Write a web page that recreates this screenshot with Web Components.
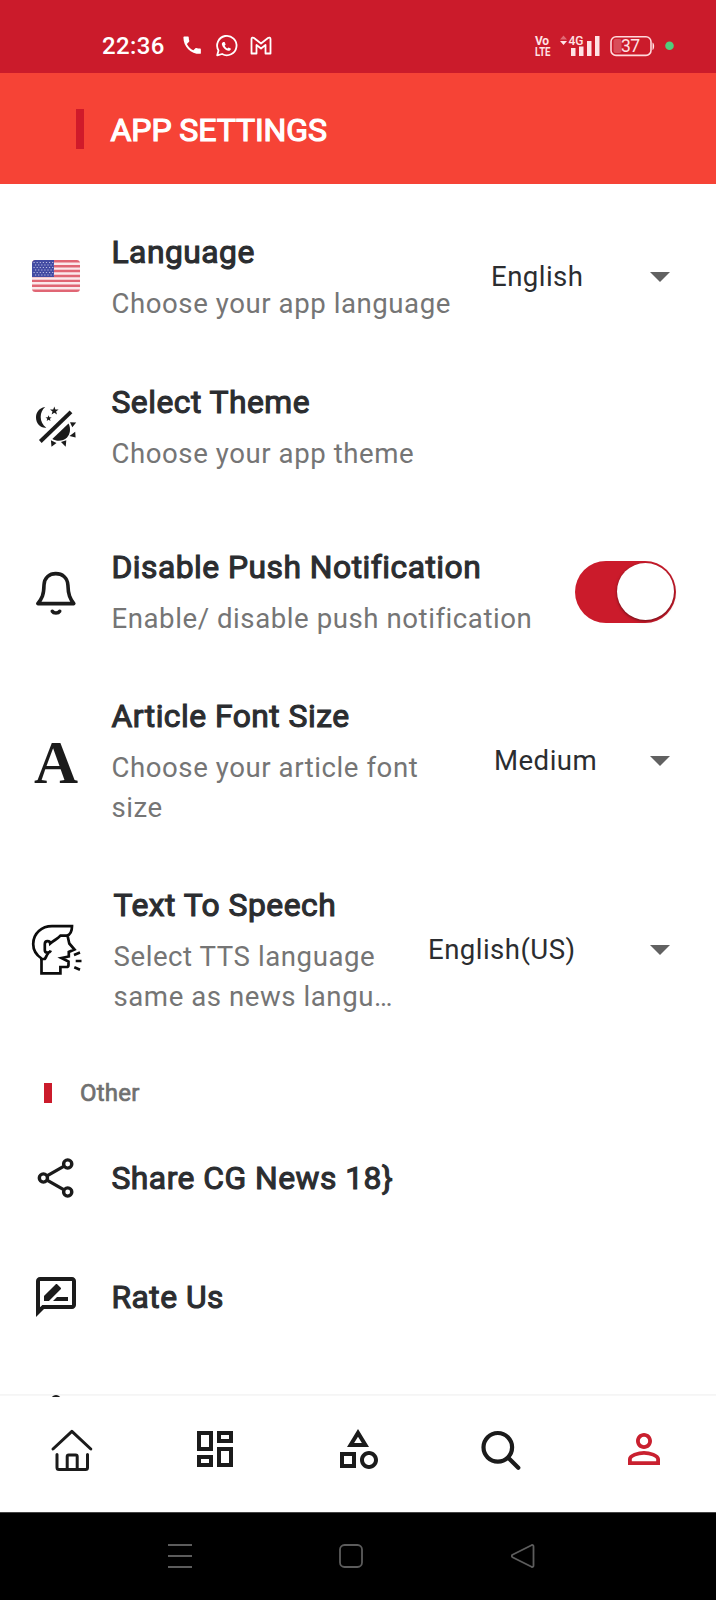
<!DOCTYPE html>
<html lang="en">
<head>
<meta charset="utf-8">
<title>App Settings</title>
<style>
html, body { margin: 0; background: #fff; font-family: Roboto, "Liberation Sans", sans-serif; }
</style>
</head>
<body>
<settings-screen></settings-screen>
<script>
const define = (name, html, setup) => {
  const tpl = document.createElement('template');
  tpl.innerHTML = html;
  customElements.define(name, class extends HTMLElement {
    constructor() {
      super();
      this.attachShadow({ mode: 'open' }).append(tpl.content.cloneNode(true));
    }
    connectedCallback() { if (setup) setup(this, this.shadowRoot); }
  });
};

define('status-bar', `
<style>
:host { display: flex; align-items: center; height: 72.500px; box-sizing: border-box; padding: 20px 42px 0 102px; background: #cb1b2b; color: #fff; }
.time { font-size: 24px; font-weight: 500; line-height: 28px; letter-spacing: .4px; width: 78px; }
svg { display: block; overflow: visible; }
.right { margin-left: auto; }
text { font-family: Roboto, sans-serif; fill: #ffe3e5; }
</style>
<span class="time">22:36</span>
<svg width="94" height="24" viewBox="0 0 94 24" fill="#fff">
  <path transform="translate(.5 -.5) scale(.97)" d="M6.620 10.790c1.440 2.830 3.760 5.140 6.590 6.590l2.200-2.200c.27-.27.67-.36 1.020-.24 1.120.37 2.330.57 3.570.57.55 0 1 .45 1 1V20c0 .55-.45 1-1 1-9.390 0-17-7.610-17-17 0-.55.45-1 1-1h3.500c.55 0 1 .45 1 1 0 1.250.2 2.450.57 3.570.11.35.03.74-.25 1.020l-2.200 2.200z"/>
  <path d="M37.200 21.300l1.300-4.800a9.700 9.700 0 1 1 3.600 3.500z" fill="none" stroke="#fff" stroke-width="1.800" stroke-linejoin="round"/>
  <path transform="translate(38.800 3.200) scale(.68)" d="M6.620 7c-1.500.5-2.600 2-2 4 1 4 5 8 9 9 2 .4 4-1 4.300-3l-3.500-2-1.800 1.600c-2-1-3.200-2.200-4-4l1.500-1.800L8.500 7z"/>
  <path d="M71.500 19.500V5c0-1.500 1.500-1.800 2.500-1l7 5.500 7-5.500c1-.8 2.500-.5 2.500 1v14.500h-5V11L81 14.500 76.500 11v8.500z" fill="none" stroke="#fff" stroke-width="1.800" stroke-linejoin="round"/>
</svg>
<svg class="right" width="140" height="24" viewBox="534 34 140 24" fill="#ffe3e5">
  <text x="535" y="44.700" font-size="12" font-weight="700" textLength="14">Vo</text>
  <text x="535" y="55.600" font-size="12" font-weight="700" textLength="15.500" lengthAdjust="spacingAndGlyphs">LTE</text>
  <path d="M560 39.500l3.500-4 3.500 4z" opacity=".4"/><path d="M560 41h7l-3.500 4z"/>
  <text x="568.500" y="45" font-size="13.500" font-weight="500" textLength="15" lengthAdjust="spacingAndGlyphs">4G</text>
  <path d="M571 48h4.500v8H571zM579 46.500h4.500V56H579zM587 41h4.500v15H587zM595 36h4.500v20H595z"/>
  <rect x="611" y="36.800" width="40" height="18.600" rx="5" fill="none" stroke="#ffd9dc" stroke-width="1.600"/>
  <rect x="613.500" y="39" width="8" height="14" rx="2" opacity=".25"/>
  <path d="M652.500 42.500c2.200 1 2.200 6.500 0 7.500z"/>
  <text x="621" y="52.300" font-size="17.500" textLength="19">37</text>
  <circle cx="669.500" cy="45.700" r="4.300" fill="#50cd7b"/>
</svg>`);

define('app-header', `
<style>
:host { display: flex; align-items: center; height: 111.500px; padding-left: 75.500px; gap: 27px; background: #f64336; color: #fff; }
i { width: 8px; height: 40px; background: #d01a2a; margin-top: 2px; }
span { font-size: 32px; line-height: 44px; -webkit-text-stroke: 1.200px #fff; margin-top: 3px; letter-spacing: -.08px; white-space: nowrap; }
</style><i></i><span><slot></slot></span>`);

define('setting-row', `
<style>
:host { display: flex; align-items: center; padding: 0 40px 0 32px; box-sizing: border-box; color: #2b2d30; }
.icon { width: 48px; height: 48px; flex: none; color: #1b1b1b; }
.text { flex: 1; min-width: 0; margin-left: var(--tx, 31.500px); white-space: nowrap; }
.title { display: block; font-size: 31.820px; line-height: 44px; -webkit-text-stroke: 1.100px currentColor; letter-spacing: .48px; }
.sub { display: block; margin-top: 10px; font-size: 27.600px; line-height: 40px; color: #757575; letter-spacing: .56px; }
.sub[hidden] { display: none; }
::slotted(svg) { display: block; width: 48px; height: 48px; overflow: visible; }
</style>
<span class="icon"><slot name="icon"></slot></span>
<span class="text"><span class="title"><slot></slot></span><span class="sub"><slot name="sub"></slot></span></span>
<slot name="control"></slot>`,
(el, root) => { root.querySelector('.sub').hidden = !el.querySelector('[slot=sub]'); });

define('drop-down', `
<style>
:host { display: flex; align-items: center; justify-content: space-between; flex: none; box-sizing: border-box; padding-right: 6px; font-size: 27.600px; line-height: 40px; color: #2b2d30; letter-spacing: .45px; }
span { margin-top: -1px; }
svg { display: block; }
</style><span><slot></slot></span><svg width="20" height="10" viewBox="0 0 20 10"><path d="M0 0h20L10 10z" fill="#616161"/></svg>`);

define('toggle-switch', `
<style>
:host { display: flex; justify-content: flex-end; align-items: center; flex: none; width: 101px; height: 62px; border-radius: 31px; background: #cb1b2b; box-sizing: border-box; padding-right: 2px; margin-top: -1px; }
i { width: 57px; height: 57px; border-radius: 50%; background: #fff; box-shadow: 0 1px 3px rgba(0,0,0,.5); }
</style><i></i>`);

define('section-label', `
<style>
:host { display: flex; align-items: center; padding-left: 44px; gap: 28px; height: 32px; color: #707070; font-size: 24px; line-height: 32px; letter-spacing: .25px; -webkit-text-stroke: .7px currentColor; }
i { width: 8px; height: 20px; background: #cb1b2b; margin-top: -1px; }
</style><i></i><span><slot></slot></span>`);

define('letter-icon', `
<style>
:host { display: flex; width: 48px; height: 48px; align-items: center; justify-content: center; font: 700 61px/48px "Liberation Serif", serif; color: #1b1b1b; }
span { margin-top: 3px; }
</style><span>A</span>`);

define('tab-bar', `
<style>
:host { display: grid; grid-template-columns: repeat(5, 1fr); height: 115px; box-sizing: border-box; padding-top: 28px; justify-items: center; background: #fff; color: #1b1b1b; }
svg { width: 48px; height: 48px; fill: currentColor; overflow: visible; }
.line { fill: none; stroke: currentColor; stroke-width: 3; stroke-linecap: round; stroke-linejoin: round; }
.on { color: #c9202f; }
</style>
<svg class="line" viewBox="0 0 48 48"><path d="M5 24 23.900 6.300 42.800 24M9 29.500V42.500q0 2 2 2H37.500q2 0 2-2V29.500M19.200 44.500V31.500q0-1.500 1.500-1.500h7q1.500 0 1.500 1.500v13"/></svg>
<svg viewBox="0 0 24 24"><path d="M19 5v2h-4V5h4M9 5v6H5V5h4m10 8v6h-4v-6h4M9 17v2H5v-2h4M21 3h-8v6h8V3zM11 3H3v10h8V3zm10 8h-8v10h8V11zm-10 4H3v6h8v-6z"/></svg>
<svg viewBox="0 0 24 24"><path d="M12 2l-5.500 9h11L12 2zm0 3.840L13.930 9h-3.870L12 5.840zM17.500 13c-2.490 0-4.500 2.010-4.500 4.500s2.010 4.500 4.500 4.500 4.500-2.010 4.500-4.500-2.010-4.500-4.500-4.500zm0 7c-1.380 0-2.500-1.120-2.500-2.500s1.120-2.500 2.500-2.500 2.500 1.120 2.500 2.500-1.120 2.500-2.500 2.500zM3 21.500h8v-8H3v8zm2-6h4v4H5v-4z"/></svg>
<svg class="line" viewBox="0 0 48 48" style="stroke-width:4.200"><circle cx="20.800" cy="22.300" r="14.300"/><path d="M31.500 33 41.300 42.800"/></svg>
<svg class="on" viewBox="0 0 24 24"><path d="M12 5.900c1.160 0 2.100.94 2.100 2.100s-.94 2.100-2.100 2.100S9.900 9.160 9.900 8s.94-2.100 2.100-2.100m0 9c2.970 0 6.100 1.460 6.100 2.100v1.100H5.900V17c0-.64 3.130-2.100 6.100-2.100M12 4C9.790 4 8 5.790 8 8s1.790 4 4 4 4-1.790 4-4-1.790-4-4-4zm0 9c-2.670 0-8 1.340-8 4v3h16v-3c0-2.660-5.330-4-8-4z"/></svg>`);

define('system-nav', `
<style>
:host { display: flex; align-items: center; justify-content: space-between; height: 88px; box-sizing: border-box; padding: 0 181.500px 1px 168px; background: #000; border-top: 1px solid #444; }
svg { width: 24px; height: 24px; fill: none; stroke: #5c5c5c; stroke-width: 1.800; stroke-linejoin: round; }
</style>
<svg viewBox="0 0 24 24"><path d="M0 1h24M0 12h24M0 23h24"/></svg>
<svg viewBox="0 0 24 24"><rect x="1" y="1" width="22" height="22" rx="4.500"/></svg>
<svg viewBox="0 0 24 24"><path d="M1.500 10.800 20.500 1.200Q22.500.500 22.500 2.500V21.500Q22.500 23.500 20.500 22.800L1.500 13.200Q0 12 1.500 10.800z"/></svg>`);

define('settings-screen', `
<style>
:host { display: block; width: 716px; height: 1600px; overflow: hidden; background: #fff; }
main { display: flex; flex-direction: column; height: 1213px; box-sizing: border-box; padding-top: 47px; overflow: hidden; background: linear-gradient(#f4f4f4, #f8f8f8) 0 1210px / 100% 2px no-repeat #fff; }
main > * { flex: none; }
.r1 { height: 92px; margin-bottom: 58px; }
.r2 { height: 92px; margin-bottom: 73px; }
.r3 { height: 92px; margin-bottom: 57px; }
.r4 { height: 132px; margin-bottom: 57px; }
.r5 { height: 132px; margin-bottom: 61px; --tx: 33.500px; }
.other { margin-bottom: 31px; }
.r6 { height: 76px; margin-bottom: 43px; }
.r7 { height: 76px; margin-bottom: 60px; }
</style>
<status-bar></status-bar>
<app-header>APP SETTINGS</app-header>
<main>
  <setting-row class="r1">Language
    <svg slot="icon" viewBox="0 0 48 48">
      <clipPath id="f"><rect x="0" y="7" width="48" height="32" rx="3.500"/></clipPath>
      <g clip-path="url(#f)"><rect y="7" width="48" height="32" fill="#fbe9eb"/>
      <path d="M0 8.250H48M0 13.150H48M0 18.050H48M0 22.950H48M0 27.850H48M0 32.750H48M0 37.700H48" stroke="#e06674" stroke-width="2.450"/>
      <rect y="7" width="22" height="17" fill="#434ba3"/>
      <path d="M1.500 9.500H22M3 12H22M1.500 14.500H22M3 17H22M1.500 19.500H22M3 22H22" stroke="#b9bce0" stroke-width="1.100" stroke-dasharray="1.200 1.900"/></g>
    </svg>
    <span slot="sub">Choose your app language</span>
    <drop-down slot="control" style="width:185px">English</drop-down>
  </setting-row>
  <setting-row class="r2">Select Theme
    <svg slot="icon" viewBox="0 0 48 48" fill="#1b1b1b">
      <path d="M13.200 4C6.500 5 4 10 4 14.500 4 20.500 8.500 25.300 14.300 24.700 10.500 22 8.700 18 8.700 14 8.700 10 10.200 6.500 13.200 4z"/>
      <path d="M22.300 3.400l1.100 3 3.200.1-2.500 2 .9 3.100-2.700-1.800-2.700 1.800.9-3.100-2.500-2 3.200-.1zM16.600 12.200l.8 2.100 2.300.1-1.800 1.400.6 2.200-1.900-1.200-1.900 1.200.6-2.200-1.800-1.400 2.300-.1z"/>
      <path d="M8.300 38.500 39 8.900" stroke="#1b1b1b" stroke-width="3.900"/>
      <path d="M20.300 36 36.500 20.500C39 25 38.300 31 35 34.500 31 38.300 25 38.800 20.300 36z"/>
      <path d="M38 19.200 44.200 19.500 40.300 24.200zM43.200 28.800 37.500 33 43.600 34.500zM29 39 34.300 37.200 33.700 43.700zM18.900 37.300 24.500 39.900 19.500 43.700z"/>
    </svg>
    <span slot="sub">Choose your app theme</span>
  </setting-row>
  <setting-row class="r3">Disable Push Notification
    <svg slot="icon" viewBox="0 0 48 48" fill="none" stroke="#1b1b1b" stroke-width="3.600" stroke-linejoin="round" stroke-linecap="round">
      <path d="M5.800 35.600C10 30.500 11.800 27 12 17 12.300 9.500 17.500 5.600 23.800 5.600S35.500 9.500 35.900 17C36.200 27 38 30.500 41.800 35.600z"/><path d="M20.300 43.300C21.700 45.600 26.200 45.600 27.700 43.300"/>
    </svg>
    <span slot="sub">Enable/ disable push notification</span>
    <toggle-switch slot="control"></toggle-switch>
  </setting-row>
  <setting-row class="r4">Article Font Size
    <letter-icon slot="icon"></letter-icon>
    <span slot="sub">Choose your article font<br>size</span>
    <drop-down slot="control" style="width:182px">Medium</drop-down>
  </setting-row>
  <setting-row class="r5">Text To Speech
    <svg slot="icon" viewBox="0 0 48 48" fill="none" stroke="#0c0c0c" stroke-width="2.700">
      <path d="M9.500 33V47.300H28.400V41H34.500Q36.500 41 36.500 39V35.500L29.500 32 36.800 30.500V26L42.500 23.500 37.300 17.500 35.500 9.500M9.500 32.500C3.500 28.500 1.200 24 1.200 18 1.200 7 10 .200 20 .200H40C40 5 38.500 8.500 34.800 9.700H28.500C25 13.500 22 14 18.200 17.500 17.800 14.500 13 14.200 12.800 18V24C12.800 27.500 17.500 27.500 18.800 24.500M16.500 27C14.500 28.500 14.500 31 12.700 33H8"/>
      <path d="M42 28.900 48 26.600M43.700 35H49.500M42.300 41.300 48 43.700"/>
    </svg>
    <span slot="sub">Select TTS language<br>same as news langu…</span>
    <drop-down slot="control" style="width:248px">English(US)</drop-down>
  </setting-row>
  <section-label class="other">Other</section-label>
  <setting-row class="r6">Share CG News 18}
    <svg slot="icon" viewBox="0 0 48 48" fill="none" stroke="#1b1b1b" stroke-width="3.400">
      <circle cx="11.400" cy="24" r="4.100"/><circle cx="35.700" cy="10" r="4.100"/><circle cx="35.700" cy="38" r="4.100"/><path d="M15 21.900 32.100 12.100M15 26.100 32.100 35.900"/>
    </svg>
  </setting-row>
  <setting-row class="r7">Rate Us
    <svg slot="icon" viewBox="0 0 24 24" fill="#1b1b1b"><path d="M20 2H4c-1.100 0-2 .9-2 2v18l4-4h14c1.100 0 2-.9 2-2V4c0-1.100-.9-2-2-2zm0 14H5.170L4 17.170V4h16v12zM10.500 14H18v-2h-5.500zm3.860-5.870c.2-.2.2-.51 0-.71l-1.770-1.770c-.2-.2-.51-.2-.71 0L6 11.530V14h2.470l5.890-5.870z"/></svg>
  </setting-row>
  <svg width="48" height="12" style="margin-left:32px"><circle cx="24" cy="5.600" r="5.600" fill="#1b1b1b"/></svg>
</main>
<tab-bar></tab-bar>
<system-nav></system-nav>`);
</script>
</body>
</html>
